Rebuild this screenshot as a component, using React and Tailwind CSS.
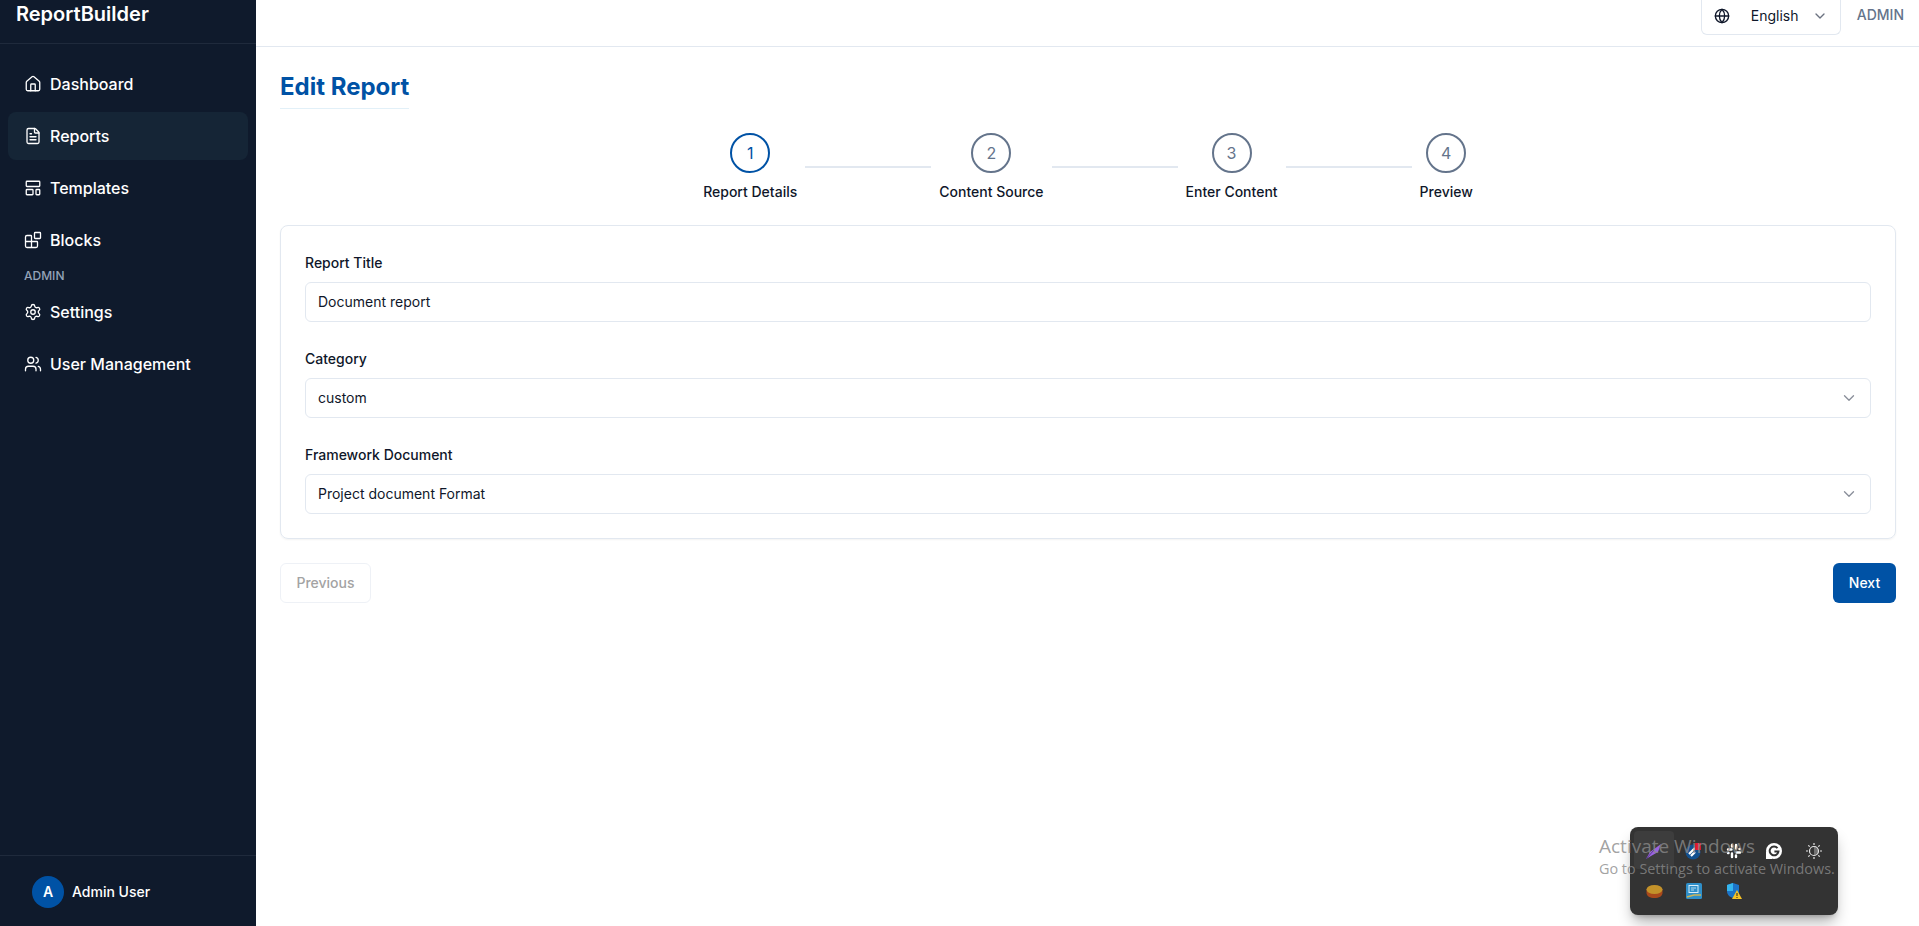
import { House, FileText, LayoutTemplate, Blocks, Settings, Users, Globe, ChevronDown } from 'lucide-react';

const navTop = [
  { label: 'Dashboard', icon: House },
  { label: 'Reports', icon: FileText, active: true },
  { label: 'Templates', icon: LayoutTemplate },
  { label: 'Blocks', icon: Blocks },
];
const navAdmin = [
  { label: 'Settings', icon: Settings },
  { label: 'User Management', icon: Users },
];
const steps = [
  { n: 1, label: 'Report Details', active: true },
  { n: 2, label: 'Content Source' },
  { n: 3, label: 'Enter Content' },
  { n: 4, label: 'Preview' },
];

function NavItem({ item }) {
  const Icon = item.icon;
  return (
    <div className={`flex items-center gap-2 h-12 px-4 rounded-lg text-[16px] font-medium text-white ${item.active ? 'bg-[#152536]' : ''}`}>
      <Icon size={18} strokeWidth={1.75} />
      <span>{item.label}</span>
    </div>
  );
}

function Field({ label, value, select }) {
  return (
    <div>
      <div className="text-sm font-medium text-[#0f172a] leading-[26px] mb-[6px]">{label}</div>
      <div className="flex items-center justify-between h-10 px-3 border border-[#e2e8f0] rounded-md text-sm text-[#0f172a]">
        <span>{value}</span>
        {select && <ChevronDown size={18} strokeWidth={1.75} className="text-[#6b7280]/80" />}
      </div>
    </div>
  );
}

function Tray() {
  return (
    <div className="absolute left-[1630px] top-[827px] w-[208px] h-[88px] bg-[#333333] rounded-lg shadow-lg shadow-black/30">
      <div className="absolute left-[4px] top-[4px] w-[40px] h-[38px] bg-[#3d3d3d] rounded" />
      <div className="absolute left-0 top-0 w-full h-full grid grid-cols-[repeat(5,40px)] grid-rows-2 px-[4px] py-[4px]">
        <div className="flex items-center justify-center">
          <svg width="18" height="18" viewBox="0 0 18 18"><path d="M1 17 L5 10 L16 2 L13 10 L6 14 Z" fill="#9a63e0" /><path d="M1 17 L9 8" stroke="#5a3a8c" strokeWidth="1" /></svg>
        </div>
        <div className="flex items-center justify-center">
          <svg width="18" height="18" viewBox="0 0 18 18"><circle cx="8" cy="10" r="7.5" fill="#12508f" /><path d="M4 12 L10 6 M6 14 L10 10" stroke="#fff" strokeWidth="2.2" /><rect x="10" y="1" width="6" height="7" fill="#e01b2f" /></svg>
        </div>
        <div className="flex items-center justify-center">
          <svg width="16" height="16" viewBox="0 0 16 16" fill="none" stroke="#fff" strokeWidth="2.4" strokeLinecap="round"><path d="M2 6.5h3.5M6 2v1.5M14 9.5h-3.5M10 14v-1.5M10 2v3.5M14 6h-.5M6 14v-3.5M2 10h.5" /></svg>
        </div>
        <div className="flex items-center justify-center">
          <svg width="16" height="16" viewBox="0 0 16 16"><circle cx="8" cy="8" r="8" fill="#fff" /><rect x="0" y="9" width="6" height="7" fill="#fff" /><path d="M11.5 5.2 A4.4 4.4 0 1 0 12.4 8.6 H8.4" fill="none" stroke="#333" strokeWidth="2" /></svg>
        </div>
        <div className="flex items-center justify-center">
          <svg width="18" height="18" viewBox="0 0 18 18" fill="none" stroke="#e5e5e5" strokeWidth="1.2"><circle cx="9" cy="9" r="4.5" /><path d="M9 4.5 A4.5 4.5 0 0 1 9 13.5 Z" fill="#e5e5e5" fillOpacity="0.35" stroke="none" /><path d="M9 1v2M9 15v2M1 9h2M15 9h2M3.3 3.3l1.4 1.4M13.3 13.3l1.4 1.4M3.3 14.7l1.4-1.4M13.3 4.7l1.4-1.4" /></svg>
        </div>
        <div className="flex items-center justify-center">
          <svg width="17" height="13" viewBox="0 0 17 13"><path d="M0.5 4 V8 C0.5 11 4 13 8.5 13 C13 13 16.5 11 16.5 8 V4 Z" fill="#a9491b" /><ellipse cx="8.5" cy="4.5" rx="8" ry="4.5" fill="#c3922a" /></svg>
        </div>
        <div className="flex items-center justify-center">
          <svg width="16" height="16" viewBox="0 0 16 16"><rect width="16" height="16" rx="1.5" fill="#2f8fc9" /><rect x="3" y="2.5" width="9" height="7" fill="none" stroke="#d8eefa" strokeWidth="1" /><path d="M5 5h5M5 7h3" stroke="#d8eefa" strokeWidth="0.8" /><path d="M1 14 L8 12 H15" stroke="#c9b458" strokeWidth="1.5" fill="none" /></svg>
        </div>
        <div className="flex items-center justify-center">
          <svg width="18" height="18" viewBox="0 0 18 18"><path d="M8 1 L14 3 V9 C14 13 11 15 8 16 C5 15 2 13 2 9 V3 Z" fill="#1c74c8" /><path d="M8 1 L8 9 H2 V3 Z" fill="#35b6ee" /><path d="M12 8 L17 17 H7 Z" fill="#f7c325" /><rect x="11.5" y="11" width="1" height="3" fill="#222" /><rect x="11.5" y="15" width="1" height="1" fill="#222" /></svg>
        </div>
      </div>
    </div>
  );
}

export default function App() {
  return (
    <div className="relative flex w-full h-[926px] overflow-hidden bg-white font-['Inter',sans-serif]">
      <aside className="flex flex-col w-[256px] shrink-0 bg-[#0f1a2c]">
        <div className="h-[44px] border-b border-[#1f2a3c] px-4 text-[20px] font-semibold leading-7 text-white">ReportBuilder</div>
        <nav className="flex-1 flex flex-col gap-1 px-2 pt-4">
          {navTop.map((item) => <NavItem key={item.label} item={item} />)}
          <div className="px-4 text-xs font-medium text-[#94a3b8] leading-4">ADMIN</div>
          {navAdmin.map((item) => <NavItem key={item.label} item={item} />)}
        </nav>
        <div className="h-[71px] pt-[2px] border-t border-[#1f2a3c] flex items-center gap-2 px-8">
          <div className="w-8 h-8 rounded-full bg-[#0052a5] flex items-center justify-center text-sm font-semibold text-white">A</div>
          <span className="text-sm font-medium text-white">Admin User</span>
        </div>
      </aside>

      <main className="flex-1 min-w-0 flex flex-col">
        <header className="h-[47px] shrink-0 border-b border-[#e2e8f0] flex items-start justify-end pr-[15px]">
          <div className="flex items-center w-[140px] h-[35px] pb-[2px] border border-t-0 border-[#e2e8f0] rounded-b-md px-3 text-sm text-[#0f172a]">
            <Globe size={16} />
            <span className="ml-[21px] flex-1">English</span>
            <ChevronDown size={16} className="text-[#6b7280]" />
          </div>
          <span className="ml-4 mt-[5px] text-sm font-medium text-[#64748b]">ADMIN</span>
        </header>

        <div className="pl-6 pr-[23px] pt-[22px]">
          <h1 className="inline-block pb-[3px] border-b border-[#e2f0f8] text-2xl font-bold leading-9 text-[#0052a5]">Edit Report</h1>

          <div className="flex justify-center items-start mt-6">
            {steps.map((s, i) => (
              <div key={s.n} className="flex items-start">
                <div className="flex flex-col items-center">
                  <div className={`w-10 h-10 rounded-full border-2 flex items-center justify-center text-base ${s.active ? 'border-[#0052a5] text-[#0052a5]' : 'border-[#64748b] text-[#64748b]'}`}>{s.n}</div>
                  <div className="mt-[9px] text-sm font-medium leading-5 text-[#0f172a] whitespace-nowrap">{s.label}</div>
                </div>
                {i < steps.length - 1 && <div className="w-[126px] h-[2px] mt-[33px] mx-2 bg-[#e2e8f0]" />}
              </div>
            ))}
          </div>

          <div className="mt-[23px] border border-[#e2e8f0] rounded-lg shadow-xs p-6 flex flex-col gap-6">
            <Field label="Report Title" value="Document report" />
            <Field label="Category" value="custom" select />
            <Field label="Framework Document" value="Project document Format" select />
          </div>

          <div className="flex justify-between mt-6">
            <div className="flex items-center justify-center w-[91px] h-10 border border-[#e2e8f0]/60 rounded-md text-sm font-medium text-[#a3a3a3]">Previous</div>
            <div className="flex items-center justify-center w-[63px] h-10 rounded-md bg-[#0052a5] text-sm font-medium text-white">Next</div>
          </div>
        </div>
      </main>

      <Tray />
      <div className="absolute left-[1599px] top-[832px] text-[19px] leading-7 text-[#8a8a8a]/80 font-['Open_Sans',sans-serif]">Activate Windows</div>
      <div className="absolute left-[1599px] top-[859px] text-[14.4px] leading-5 text-[#8a8a8a]/80 font-['Open_Sans',sans-serif]">Go to Settings to activate Windows.</div>
    </div>
  );
}
